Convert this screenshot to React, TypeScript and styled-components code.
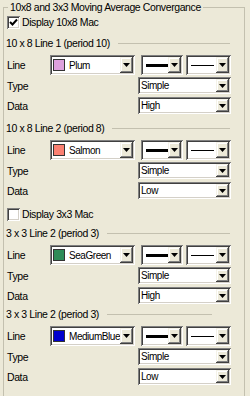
import React from 'react';
import styled, { createGlobalStyle } from 'styled-components';

const GlobalStyle = createGlobalStyle`
  html, body {
    margin: 0;
    padding: 0;
    width: 250px;
    height: 396px;
    overflow: hidden;
    background: #ECE9D8;
  }
  body {
    font-family: "Liberation Sans", Arial, sans-serif;
    font-size: 10.5px;
    letter-spacing: -0.4px;
    color: #000;
  }
`;

const Frame = styled.fieldset`
  margin: 0 0 0 3px;
  width: 242px;
  min-height: 430px;
  box-sizing: border-box;
  padding: 0 0 0 2px;
  border: 1px solid #C3C0AF;
  border-radius: 0;
`;

const Legend = styled.legend`
  margin-left: 2px;
  padding: 0 2px;
  line-height: 14px;
`;

const CheckRow = styled.div<{ $h: number; $mt: number }>`
  display: flex;
  align-items: center;
  gap: 2px;
  height: ${p => p.$h}px;
  margin-top: ${p => p.$mt}px;
  padding-left: 1px;
`;

const CheckBox = styled.span`
  display: flex;
  align-items: center;
  justify-content: center;
  width: 13px;
  height: 13px;
  box-sizing: border-box;
  background: #fff;
  box-shadow: inset 1px 1px #808080, inset -1px -1px #fff, inset 2px 2px #404040, inset -2px -2px #D4D0C8;
`;

const SectionTitle = styled.div<{ $ruleEnd: number; $mt: number }>`
  display: flex;
  align-items: center;
  gap: 8px;
  height: 14px;
  margin-top: ${p => p.$mt}px;
  margin-bottom: 5px;
  padding-right: ${p => p.$ruleEnd}px;
  white-space: nowrap;
`;

const Rule = styled.div`
  flex: 1;
  height: 1px;
  background: #C3C0AF;
`;

const Row = styled.div<{ $h: number; $mt: number }>`
  display: flex;
  align-items: center;
  height: ${p => p.$h}px;
  margin-top: ${p => p.$mt}px;
`;

const Label = styled.span<{ $w: number }>`
  width: ${p => p.$w}px;
  flex-shrink: 0;
  padding-left: 1px;
  box-sizing: border-box;
`;

const Combo = styled.div<{ $w: number; $ml?: number }>`
  display: flex;
  align-items: stretch;
  width: ${p => p.$w}px;
  height: 100%;
  margin-left: ${p => p.$ml || 0}px;
  padding: 2px;
  box-sizing: border-box;
  background: #fff;
  box-shadow: inset 1px 1px #808080, inset -1px -1px #fff, inset 2px 2px #404040, inset -2px -2px #D4D0C8;
`;

const Value = styled.div`
  flex: 1;
  display: flex;
  align-items: center;
  gap: 4px;
  padding-left: 1px;
  overflow: hidden;
  white-space: nowrap;
  font-size: 10px;
  letter-spacing: -0.45px;
`;

const Swatch = styled.span<{ $c: string }>`
  flex-shrink: 0;
  width: 12px;
  height: 12px;
  box-sizing: border-box;
  border: 1px solid #333;
  background: ${p => p.$c};
`;

const Stroke = styled.span<{ $t: number }>`
  width: 23px;
  margin-left: 2px;
  height: ${p => p.$t}px;
  background: #000;
`;

const DropButton = styled.div`
  display: flex;
  align-items: center;
  justify-content: center;
  width: 13px;
  flex-shrink: 0;
  background: #ECE9D8;
  box-shadow: inset -1px -1px #404040, inset 1px 1px #F4F2E8, inset -2px -2px #808080, inset 2px 2px #fff;
`;

const Arrow = () => (
  <svg width="7" height="4" viewBox="0 0 7 4">
    <polygon points="0,0 7,0 3.5,4" fill="#000" />
  </svg>
);

const Check = () => (
  <svg width="9" height="9" viewBox="0 0 9 9">
    <path d="M1 4 L3.5 6.5 L8 1.5" stroke="#000" strokeWidth="2" fill="none" />
  </svg>
);

type Section = {
  title: string;
  color: string;
  swatch: string;
  type: string;
  data: string;
  ruleEnd: number;
  mt: number;
};

const Select = ({ w, ml, children }: { w: number; ml?: number; children: React.ReactNode }) => (
  <Combo $w={w} $ml={ml}>
    <Value>{children}</Value>
    <DropButton><Arrow /></DropButton>
  </Combo>
);

const LineSection = ({ s }: { s: Section }) => (
  <>
    <SectionTitle $ruleEnd={s.ruleEnd} $mt={s.mt}>
      {s.title}
      <Rule />
    </SectionTitle>
    <Row $h={20} $mt={0}>
      <Label $w={44}>Line</Label>
      <Select w={85}>
        <Swatch $c={s.swatch} />
        {s.color}
      </Select>
      <Select w={42} ml={6}><Stroke $t={3} /></Select>
      <Select w={45} ml={3}><Stroke $t={1} /></Select>
    </Row>
    <Row $h={17} $mt={2}>
      <Label $w={132}>Type</Label>
      <Select w={93}>{s.type}</Select>
    </Row>
    <Row $h={17} $mt={3}>
      <Label $w={132}>Data</Label>
      <Select w={93}>{s.data}</Select>
    </Row>
  </>
);

const first: Section[] = [
  { title: '10 x 8 Line 1 (period 10)', color: 'Plum', swatch: '#DDA0DD', type: 'Simple', data: 'High', ruleEnd: 14, mt: 6 },
  { title: '10 x 8 Line 2 (period 8)', color: 'Salmon', swatch: '#FA8072', type: 'Simple', data: 'Low', ruleEnd: 14, mt: 7 },
];

const second: Section[] = [
  { title: '3 x 3 Line 2 (period 3)', color: 'SeaGreen', swatch: '#2E8B57', type: 'Simple', data: 'High', ruleEnd: 14, mt: 3 },
  { title: '3 x 3 Line 2 (period 3)', color: 'MediumBlue', swatch: '#0000CD', type: 'Simple', data: 'Low', ruleEnd: 32, mt: 3 },
];

export default function App() {
  return (
    <>
      <GlobalStyle />
      <Frame>
        <Legend>10x8 and 3x3 Moving Average Convergance</Legend>
        <CheckRow $h={16} $mt={0}>
          <CheckBox><Check /></CheckBox>
          Display 10x8 Mac
        </CheckRow>
        {first.map((s, i) => <LineSection key={i} s={s} />)}
        <CheckRow $h={18} $mt={6}>
          <CheckBox />
          Display 3x3 Mac
        </CheckRow>
        {second.map((s, i) => <LineSection key={i} s={s} />)}
      </Frame>
    </>
  );
}
